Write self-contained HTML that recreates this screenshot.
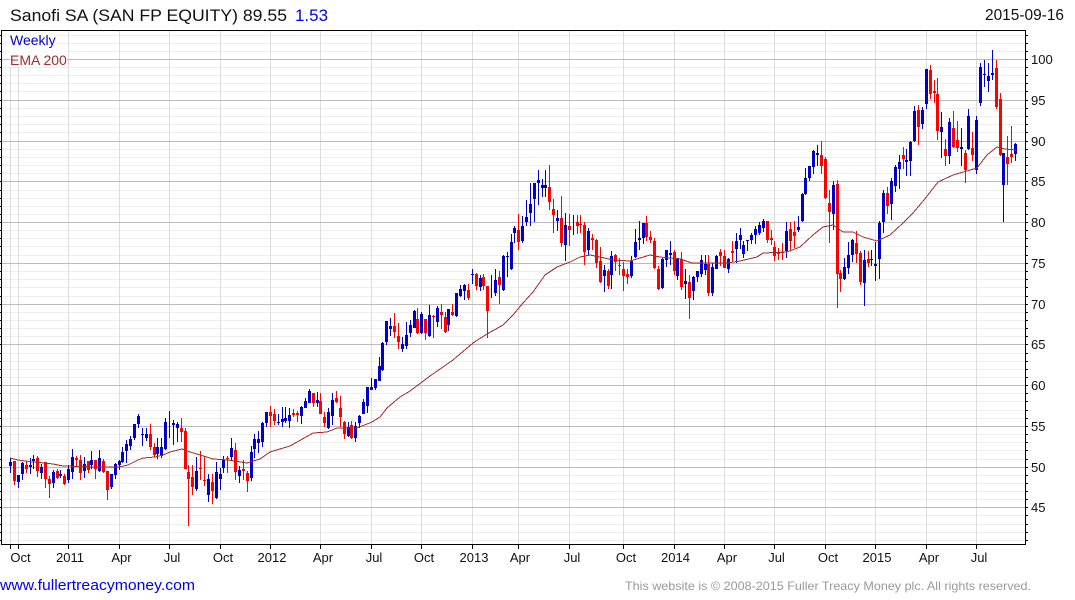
<!DOCTYPE html>
<html><head><meta charset="utf-8"><title>Sanofi SA</title>
<style>html,body{margin:0;padding:0;background:#fff}svg{display:block}text{font-family:"Liberation Sans",Arial,sans-serif}</style>
</head><body>
<svg xmlns="http://www.w3.org/2000/svg" width="1075" height="600" viewBox="0 0 1075 600">
<g shape-rendering="crispEdges" fill="none" stroke-width="1">
<path stroke="#eeeeee" d="M2 35.5H1025M2 43.5H1025M2 51.5H1025M2 67.5H1025M2 75.5H1025M2 83.5H1025M2 91.5H1025M2 108.5H1025M2 116.5H1025M2 124.5H1025M2 132.5H1025M2 149.5H1025M2 157.5H1025M2 165.5H1025M2 173.5H1025M2 190.5H1025M2 198.5H1025M2 206.5H1025M2 214.5H1025M2 230.5H1025M2 238.5H1025M2 246.5H1025M2 255.5H1025M2 271.5H1025M2 279.5H1025M2 287.5H1025M2 296.5H1025M2 312.5H1025M2 320.5H1025M2 328.5H1025M2 336.5H1025M2 353.5H1025M2 361.5H1025M2 369.5H1025M2 377.5H1025M2 393.5H1025M2 401.5H1025M2 410.5H1025M2 418.5H1025M2 434.5H1025M2 442.5H1025M2 450.5H1025M2 459.5H1025M2 475.5H1025M2 483.5H1025M2 491.5H1025M2 499.5H1025M2 515.5H1025M2 524.5H1025M2 532.5H1025M2 540.5H1025"/>
<path stroke="#dddddd" d="M10.5 30V544M18.5 30V544M68.5 30V544M119.5 30V544M169.5 30V544M220.5 30V544M270.5 30V544M320.5 30V544M371.5 30V544M421.5 30V544M472.5 30V544M518.5 30V544M569.5 30V544M623.5 30V544M674.5 30V544M724.5 30V544M774.5 30V544M825.5 30V544M875.5 30V544M926.5 30V544M976.5 30V544"/>
<path stroke="#bbbbbb" d="M2 59.5H1025M2 100.5H1025M2 141.5H1025M2 181.5H1025M2 222.5H1025M2 263.5H1025M2 304.5H1025M2 344.5H1025M2 385.5H1025M2 426.5H1025M2 467.5H1025M2 507.5H1025"/>
<rect x="10" y="31" width="46" height="20" fill="#fff"/>
<rect x="10" y="51" width="57" height="16" fill="#fff"/>
<path stroke="#000" d="M0 35.5H1.5M0 43.5H1.5M0 51.5H1.5M0 59.5H1.5M0 67.5H1.5M0 75.5H1.5M0 83.5H1.5M0 91.5H1.5M0 100.5H1.5M0 108.5H1.5M0 116.5H1.5M0 124.5H1.5M0 132.5H1.5M0 141.5H1.5M0 149.5H1.5M0 157.5H1.5M0 165.5H1.5M0 173.5H1.5M0 181.5H1.5M0 190.5H1.5M0 198.5H1.5M0 206.5H1.5M0 214.5H1.5M0 222.5H1.5M0 230.5H1.5M0 238.5H1.5M0 246.5H1.5M0 255.5H1.5M0 263.5H1.5M0 271.5H1.5M0 279.5H1.5M0 287.5H1.5M0 296.5H1.5M0 304.5H1.5M0 312.5H1.5M0 320.5H1.5M0 328.5H1.5M0 336.5H1.5M0 344.5H1.5M0 353.5H1.5M0 361.5H1.5M0 369.5H1.5M0 377.5H1.5M0 385.5H1.5M0 393.5H1.5M0 401.5H1.5M0 410.5H1.5M0 418.5H1.5M0 426.5H1.5M0 434.5H1.5M0 442.5H1.5M0 450.5H1.5M0 459.5H1.5M0 467.5H1.5M0 475.5H1.5M0 483.5H1.5M0 491.5H1.5M0 499.5H1.5M0 507.5H1.5M0 515.5H1.5M0 524.5H1.5M0 532.5H1.5M0 540.5H1.5"/>
<path stroke="#000" d="M1025 35.5H1028M1025 43.5H1028M1025 51.5H1028M1025 59.5H1028M1025 67.5H1028M1025 75.5H1028M1025 83.5H1028M1025 91.5H1028M1025 100.5H1028M1025 108.5H1028M1025 116.5H1028M1025 124.5H1028M1025 132.5H1028M1025 141.5H1028M1025 149.5H1028M1025 157.5H1028M1025 165.5H1028M1025 173.5H1028M1025 181.5H1028M1025 190.5H1028M1025 198.5H1028M1025 206.5H1028M1025 214.5H1028M1025 222.5H1028M1025 230.5H1028M1025 238.5H1028M1025 246.5H1028M1025 255.5H1028M1025 263.5H1028M1025 271.5H1028M1025 279.5H1028M1025 287.5H1028M1025 296.5H1028M1025 304.5H1028M1025 312.5H1028M1025 320.5H1028M1025 328.5H1028M1025 336.5H1028M1025 344.5H1028M1025 353.5H1028M1025 361.5H1028M1025 369.5H1028M1025 377.5H1028M1025 385.5H1028M1025 393.5H1028M1025 401.5H1028M1025 410.5H1028M1025 418.5H1028M1025 426.5H1028M1025 434.5H1028M1025 442.5H1028M1025 450.5H1028M1025 459.5H1028M1025 467.5H1028M1025 475.5H1028M1025 483.5H1028M1025 491.5H1028M1025 499.5H1028M1025 507.5H1028M1025 515.5H1028M1025 524.5H1028M1025 532.5H1028M1025 540.5H1028"/>
<path stroke="#000" d="M1.5 30V545M1025.5 30V545M1 30.5H1026M1 544.5H1026"/>
<path stroke="#000" d="M10.5 544V549M18.5 544V549M68.5 544V549M119.5 544V549M169.5 544V549M220.5 544V549M270.5 544V549M320.5 544V549M371.5 544V549M421.5 544V549M472.5 544V549M518.5 544V549M569.5 544V549M623.5 544V549M674.5 544V549M724.5 544V549M774.5 544V549M825.5 544V549M875.5 544V549M926.5 544V549M976.5 544V549"/>
<!-- blue wicks -->
<path stroke="#0000cc" d="M10.5 458V473M18.5 475V488M22.5 462V480M30.5 458V474M33.5 455V469M41.5 464V479M53.5 470V488M60.5 470V478M68.5 465V483M72.5 449V479M84.5 457V478M91.5 451V469M99.5 450V472M111.5 474V489M115.5 463V479M119.5 460V470M122.5 447V463M126.5 440V463M130.5 436V450M134.5 424V440M138.5 414V428M142.5 428V446M146.5 428V441M157.5 438V459M161.5 438V458M165.5 418V450M169.5 411V438M173.5 420V445M177.5 422V442M196.5 457V491M208.5 474V502M216.5 462V499M220.5 468V490M223.5 456V473M231.5 438V460M239.5 466V483M251.5 446V481M254.5 434V458M258.5 431V453M262.5 422V447M266.5 412V427M278.5 414V425M282.5 407V427M285.5 407V423M289.5 408V428M301.5 406V424M305.5 398V408M309.5 389V403M317.5 392V407M328.5 408V429M332.5 393V425M348.5 422V437M355.5 422V442M359.5 415V428M363.5 399V414M367.5 387V413M371.5 378V390M375.5 379V390M379.5 357V381M382.5 342V371M386.5 321V345M390.5 318V336M402.5 337V352M406.5 322V349M410.5 320V337M414.5 310V328M421.5 312V334M429.5 305V337M437.5 306V327M448.5 309V331M456.5 293V317M460.5 285V297M464.5 284V300M472.5 269V284M480.5 275V291M491.5 275V298M495.5 269V296M503.5 255V291M507.5 252V277M511.5 234V270M514.5 226V243M522.5 216V243M526.5 200V226M530.5 183V226M534.5 183V222M538.5 170V205M542.5 179V197M545.5 170V197M557.5 210V231M565.5 213V261M573.5 215V235M588.5 228V256M604.5 265V292M611.5 251V289M631.5 256V278M635.5 229V258M639.5 221V250M643.5 223V244M662.5 258V289M666.5 250V267M670.5 241V265M677.5 258V280M685.5 269V299M693.5 276V300M697.5 271V282M701.5 255V277M705.5 255V275M712.5 263V296M716.5 255V269M728.5 258V273M736.5 233V263M740.5 228V249M743.5 241V258M747.5 240V251M751.5 233V244M755.5 226V244M759.5 222V235M763.5 219V232M786.5 222V258M798.5 216V232M802.5 193V222M805.5 168V195M809.5 166V181M813.5 150V174M817.5 145V166M833.5 181V230M844.5 258V280M848.5 242V274M852.5 239V262M864.5 250V306M871.5 250V266M875.5 242V281M879.5 221V279M883.5 190V233M891.5 178V220M895.5 165V192M899.5 155V189M906.5 149V176M910.5 141V176M914.5 106V142M922.5 107V129M926.5 69V109M941.5 112V158M949.5 118V164M961.5 128V166M968.5 109V150M976.5 116V174M980.5 63V106M984.5 60V87M988.5 63V92M992.5 50V80M1003.5 153V222M1015.5 143V161"/>
<!-- blue bodies -->
<path stroke="#0000cc" stroke-width="3" d="M10.5 462V466M18.5 475V482M22.5 463V474M30.5 465V467M33.5 459V461M41.5 467V473M53.5 472V483M60.5 474V476M68.5 469V480M72.5 457V472M84.5 464V471M91.5 460V465M99.5 458V471M111.5 474V487M115.5 464V475M119.5 461V465M122.5 452V462M126.5 444V451M130.5 439V446M134.5 424V438M138.5 416V424M142.5 434V435M146.5 434V438M157.5 447V454M161.5 447V456M165.5 422V449M173.5 423V425M177.5 424V428M196.5 471V489M208.5 479V495M216.5 472V498M220.5 474V479M223.5 460V468M231.5 448V457M239.5 470V476M251.5 452V478M254.5 439V449M258.5 439V443M262.5 423V442M266.5 412V423M278.5 422V423M282.5 419V422M285.5 418V421M289.5 415V421M301.5 407V416M305.5 401V408M309.5 391V403M317.5 400V403M328.5 412V428M332.5 400V416M348.5 427V436M355.5 426V438M359.5 416V423M363.5 402V414M367.5 387V406M371.5 387V390M375.5 379V388M379.5 366V381M382.5 343V370M386.5 321V342M390.5 326V329M402.5 344V349M406.5 335V346M410.5 325V333M414.5 311V328M421.5 314V333M429.5 315V336M437.5 308V322M448.5 309V325M456.5 293V316M460.5 289V296M464.5 285V291M472.5 274V275M480.5 278V287M495.5 280V293M503.5 256V290M507.5 256V257M511.5 242V269M514.5 228V233M522.5 226V241M526.5 217V222M530.5 204V213M534.5 183V199M538.5 180V183M542.5 185V188M545.5 185V188M557.5 218V221M565.5 225V245M588.5 231V250M604.5 270V276M611.5 256V275M631.5 261V276M635.5 242V257M639.5 238V240M643.5 223V238M662.5 259V288M666.5 250V260M670.5 253V255M677.5 258V276M685.5 281V284M693.5 277V291M697.5 271V277M701.5 260V274M705.5 264V270M712.5 267V293M716.5 256V269M728.5 259V269M736.5 241V249M740.5 235V240M743.5 245V254M747.5 240V241M751.5 235V240M755.5 229V235M759.5 225V233M763.5 221V228M786.5 231V251M798.5 227V230M802.5 194V221M805.5 178V194M809.5 166V178M813.5 151V167M817.5 153V155M833.5 185V214M844.5 267V279M848.5 255V268M852.5 240V255M864.5 260V283M871.5 259V260M875.5 264V266M879.5 223V259M883.5 193V222M891.5 181V204M895.5 167V186M899.5 162V169M906.5 160V162M910.5 142V161M914.5 111V141M922.5 110V124M926.5 69V104M941.5 127V132M949.5 122V156M961.5 147V149M968.5 116V149M976.5 120V170M980.5 67V103M984.5 74V75M988.5 76V81M992.5 73V75M1003.5 153V185M1015.5 144V154"/>
<!-- red wicks -->
<path stroke="#ff0000" d="M14.5 461V485M26.5 461V473M37.5 456V477M45.5 462V488M49.5 476V498M57.5 469V479M64.5 474V485M76.5 456V466M80.5 455V480M88.5 461V473M95.5 460V479M103.5 459V473M107.5 471V500M150.5 424V450M154.5 443V457M181.5 418V442M185.5 428V469M188.5 465V526M192.5 465V495M200.5 451V480M204.5 457V486M212.5 474V504M227.5 456V473M235.5 443V480M243.5 460V480M247.5 471V492M270.5 406V427M274.5 409V425M293.5 409V417M297.5 411V422M313.5 393V407M320.5 393V414M324.5 412V427M336.5 391V403M340.5 396V427M344.5 421V439M351.5 421V439M394.5 313V338M398.5 323V349M417.5 308V334M425.5 319V340M433.5 315V338M441.5 304V329M445.5 312V333M452.5 304V316M468.5 284V300M476.5 273V290M483.5 274V290M487.5 286V338M499.5 271V304M518.5 214V250M549.5 165V210M553.5 199V233M561.5 196V247M569.5 214V246M577.5 215V234M580.5 215V233M584.5 222V265M592.5 234V250M596.5 239V268M600.5 247V283M608.5 269V289M615.5 254V271M619.5 258V275M623.5 262V291M627.5 269V284M646.5 216V241M650.5 231V243M654.5 238V269M658.5 266V290M674.5 250V275M681.5 252V290M689.5 275V319M708.5 255V296M720.5 249V266M724.5 250V268M732.5 241V262M767.5 221V243M771.5 230V245M774.5 241V261M778.5 248V260M782.5 243V260M790.5 222V250M794.5 221V248M821.5 141V174M825.5 157V199M829.5 190V243M837.5 180V308M840.5 270V292M856.5 231V263M860.5 251V285M868.5 251V267M887.5 187V214M903.5 147V169M918.5 105V145M930.5 65V99M934.5 80V103M937.5 78V140M945.5 139V166M953.5 111V148M957.5 121V152M965.5 150V183M972.5 132V161M996.5 60V109M1000.5 93V156M1007.5 136V185M1011.5 126V163"/>
<!-- red bodies -->
<path stroke="#ff0000" stroke-width="3" d="M14.5 461V481M26.5 465V469M37.5 458V471M45.5 462V479M49.5 479V484M57.5 471V478M64.5 476V484M76.5 458V460M80.5 460V473M88.5 461V470M95.5 460V469M103.5 461V472M107.5 471V490M150.5 434V447M154.5 447V455M181.5 428V432M185.5 431V469M188.5 472V479M192.5 477V487M200.5 468V469M204.5 480V481M212.5 482V491M227.5 458V459M235.5 450V472M243.5 469V471M247.5 473V481M270.5 412V416M274.5 414V421M293.5 413V415M297.5 413V415M313.5 393V403M320.5 401V414M324.5 417V423M336.5 398V402M340.5 408V417M344.5 422V434M351.5 425V438M394.5 326V332M398.5 336V342M417.5 319V333M425.5 319V333M433.5 316V317M441.5 312V315M445.5 317V332M452.5 312V315M468.5 290V298M476.5 274V286M483.5 277V286M487.5 286V311M499.5 277V285M518.5 230V242M549.5 187V202M553.5 209V215M561.5 218V243M569.5 226V230M577.5 222V226M580.5 224V225M584.5 225V252M592.5 238V240M596.5 240V263M600.5 261V282M608.5 271V286M615.5 255V262M619.5 265V266M623.5 269V276M627.5 274V277M646.5 223V237M650.5 237V240M654.5 241V268M658.5 269V289M674.5 252V271M681.5 259V287M689.5 282V298M708.5 264V293M720.5 252V256M724.5 256V268M732.5 251V253M767.5 221V240M771.5 238V240M774.5 247V256M778.5 252V254M782.5 252V253M790.5 229V241M794.5 232V236M821.5 155V166M825.5 159V198M829.5 203V212M837.5 184V274M840.5 273V279M856.5 243V254M860.5 253V282M868.5 259V263M887.5 193V206M903.5 155V159M918.5 110V127M930.5 70V94M934.5 91V93M937.5 94V131M945.5 149V156M953.5 128V147M957.5 140V148M965.5 153V170M972.5 148V155M996.5 68V107M1000.5 99V155M1007.5 157V164M1011.5 154V157"/>
</g>
<!-- EMA -->
<polyline fill="none" stroke="#a52a2a" stroke-width="1" shape-rendering="crispEdges" points="10,458 18,460 33,462 45,463 53,464 63,466 80,466.5 100,467 119,467 128,465 138,460 143,458 155,457 163,455 170,452 182,449 190,452 197,454 213,459 228,460 247,463 260,459 270,452 290,446 313,433 327,432 337,428 357,428 372,422 380,417 387,408 400,397 410,391 430,376 453,360 473,343 487,334 503,325 513,315 523,303 533,292 545,275 557,267 570,262 580,257 590,255 600,257 613,260 630,261 650,255 660,257 680,259 692,263 703,263 727,263 740,261 757,257 763,253 787,252 800,247 813,235 823,227 833,225 843,232 853,232 863,237 877,241 890,235 903,223 913,213 924,200 938,182 953,175 977,168 987,155 997,147 1005,149 1016,150"/>
<!-- header -->
<text x="10" y="21" font-size="17" fill="#111" textLength="277" lengthAdjust="spacingAndGlyphs">Sanofi SA (SAN FP EQUITY) 89.55</text>
<text x="295" y="21" font-size="17" fill="#0000ee" textLength="33" lengthAdjust="spacingAndGlyphs">1.53</text>
<text x="985" y="20" font-size="16" fill="#111" textLength="79" lengthAdjust="spacingAndGlyphs">2015-09-16</text>
<text x="10" y="45" font-size="14" fill="#0000cc">Weekly</text>
<text x="10" y="65" font-size="14" fill="#a52a2a">EMA 200</text>
<!-- y labels -->
<g font-size="13" fill="#111">
<text x="1031" y="64">100</text><text x="1031" y="105">95</text><text x="1031" y="146">90</text><text x="1031" y="186">85</text><text x="1031" y="227">80</text><text x="1031" y="268">75</text><text x="1031" y="309">70</text><text x="1031" y="349">65</text><text x="1031" y="390">60</text><text x="1031" y="431">55</text><text x="1031" y="472">50</text><text x="1031" y="512">45</text>
</g>
<!-- x labels -->
<g font-size="13" fill="#111" text-anchor="middle">
<text x="20.5" y="562">Oct</text><text x="70" y="562">2011</text><text x="121.5" y="562">Apr</text><text x="172" y="562">Jul</text><text x="223" y="562">Oct</text><text x="272" y="562">2012</text><text x="323" y="562">Apr</text><text x="374" y="562">Jul</text><text x="424" y="562">Oct</text><text x="474" y="562">2013</text><text x="520" y="562">Apr</text><text x="572" y="562">Jul</text><text x="626" y="562">Oct</text><text x="675.5" y="562">2014</text><text x="727" y="562">Apr</text><text x="776.5" y="562">Jul</text><text x="828" y="562">Oct</text><text x="877" y="562">2015</text><text x="929" y="562">Apr</text><text x="979" y="562">Jul</text>
</g>
<!-- footer -->
<text x="0" y="590" font-size="15" fill="#0000ee" textLength="195" lengthAdjust="spacingAndGlyphs">www.fullertreacymoney.com</text>
<text x="625" y="590" font-size="12" fill="#999999" textLength="406" lengthAdjust="spacingAndGlyphs">This website is © 2008-2015 Fuller Treacy Money plc. All rights reserved.</text>
</svg>
</body></html>
